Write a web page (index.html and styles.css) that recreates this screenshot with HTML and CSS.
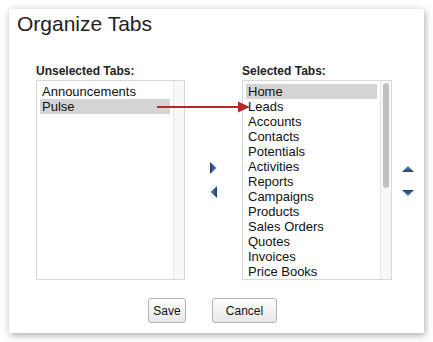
FILE: index.html
```html
<!DOCTYPE html>
<html lang="en">
<head>
    <meta charset="UTF-8">
    <meta name="viewport" content="width=device-width, initial-scale=1.0">
    <title>Organize Tabs</title>
    <link rel="stylesheet" href="styles.css">
</head>
<body>
    <div class="dialog">
        <h1 class="title">Organize Tabs</h1>

        <div class="lists">
            <div class="column">
                <div class="label">Unselected Tabs:</div>
                <div class="listbox">
                    <ul class="items">
                        <li>Announcements</li>
                        <li class="selected">Pulse</li>
                    </ul>
                    <div class="track"></div>
                </div>
            </div>

            <div class="move">
                <svg width="7" height="12" viewBox="0 0 7 12">
                    <defs>
                        <linearGradient id="gr" x1="0" y1="0" x2="1" y2="0">
                            <stop offset="0" stop-color="#1b4470"/>
                            <stop offset="1" stop-color="#4f80b3"/>
                        </linearGradient>
                    </defs>
                    <polygon points="0,0 6.5,6 0,12" fill="url(#gr)"/>
                </svg>
                <svg width="7" height="12" viewBox="0 0 7 12">
                    <defs>
                        <linearGradient id="gl" x1="0" y1="0" x2="1" y2="0">
                            <stop offset="0" stop-color="#5b8cbd"/>
                            <stop offset="1" stop-color="#1b4470"/>
                        </linearGradient>
                    </defs>
                    <polygon points="7,0 0.5,6 7,12" fill="url(#gl)"/>
                </svg>
            </div>

            <div class="column">
                <div class="label">Selected Tabs:</div>
                <div class="listbox wide">
                    <ul class="items">
                        <li class="selected">Home</li>
                        <li>Leads</li>
                        <li>Accounts</li>
                        <li>Contacts</li>
                        <li>Potentials</li>
                        <li>Activities</li>
                        <li>Reports</li>
                        <li>Campaigns</li>
                        <li>Products</li>
                        <li>Sales Orders</li>
                        <li>Quotes</li>
                        <li>Invoices</li>
                        <li>Price Books</li>
                    </ul>
                    <div class="track"><div class="thumb"></div></div>
                </div>
            </div>

            <div class="order">
                <svg width="12" height="6" viewBox="0 0 12 6">
                    <defs>
                        <linearGradient id="gu" x1="0" y1="0" x2="0" y2="1">
                            <stop offset="0" stop-color="#5b8cbd"/>
                            <stop offset="1" stop-color="#1b4470"/>
                        </linearGradient>
                    </defs>
                    <polygon points="0,6 6,0 12,6" fill="url(#gu)"/>
                </svg>
                <svg width="12" height="6" viewBox="0 0 12 6">
                    <defs>
                        <linearGradient id="gd" x1="0" y1="0" x2="0" y2="1">
                            <stop offset="0" stop-color="#1b4470"/>
                            <stop offset="1" stop-color="#4f80b3"/>
                        </linearGradient>
                    </defs>
                    <polygon points="0,0 12,0 6,6" fill="url(#gd)"/>
                </svg>
            </div>
        </div>

        <div class="actions">
            <button class="btn save">Save</button>
            <button class="btn cancel">Cancel</button>
        </div>

        <!-- callout arrow drawn over both lists -->
        <svg class="callout" width="250" height="20" viewBox="0 0 250 20">
            <line x1="148" y1="10" x2="232" y2="10" stroke="#b02a2a" stroke-width="2"/>
            <polygon points="229,4.5 241,10 229,15.5" fill="#b02a2a"/>
        </svg>
    </div>
</body>
</html>
```

FILE: styles.css
```css
body { margin: 0; background: #fff; font-family: "Liberation Sans", Arial, sans-serif; color: #111; }
.dialog { position: relative; margin: 9px; width: 415px; height: 324px; box-sizing: border-box; padding: 3px 0 0 27px; background: #fff; box-shadow: 1px 2px 7px rgba(0,0,0,0.35); }
.title { margin: 0 0 28px -19px; font-size: 21px; line-height: 24px; font-weight: normal; color: #222; }
.lists { display: flex; align-items: flex-start; }
.column { display: flex; flex-direction: column; }
.label { font-size: 12px; line-height: 14px; font-weight: bold; color: #222; margin-bottom: 2px; }
.listbox { display: flex; width: 149px; height: 200px; box-sizing: border-box; border: 1px solid #d8d8d8; }
.listbox.wide { width: 150px; }
.items { flex: 1; list-style: none; margin: 0; padding: 3px 3px 0 3px; font-size: 13px; line-height: 15px; }
.items li { padding-left: 2px; }
.items li.selected { background: #d4d4d4; }
.track { width: 10px; border-left: 1px solid #e6e6e6; background: #f8f8f8; padding-top: 2px; }
.thumb { width: 6px; height: 105px; margin-left: 2px; border-radius: 3px; background: #c1c1c1; }
.move { display: flex; flex-direction: column; gap: 12px; width: 57px; align-items: center; align-self: stretch; justify-content: center; padding-top: 16px; box-sizing: border-box; }
.order { display: flex; flex-direction: column; gap: 18px; margin-left: 10px; align-self: stretch; justify-content: center; padding-top: 18px; box-sizing: border-box; }
.order svg, .move svg { display: block; }
.actions { display: flex; gap: 26px; margin: 18px 0 0 112px; }
.btn { height: 25px; box-sizing: border-box; border: 1px solid #b4b4b4; border-radius: 3px; background: linear-gradient(#ffffff, #e6e6e6); font-family: "Liberation Sans", Arial, sans-serif; font-size: 12px; color: #111; padding: 0; }
.save { width: 38px; }
.cancel { width: 65px; }
.callout { position: absolute; left: 0; top: 88px; }
```
